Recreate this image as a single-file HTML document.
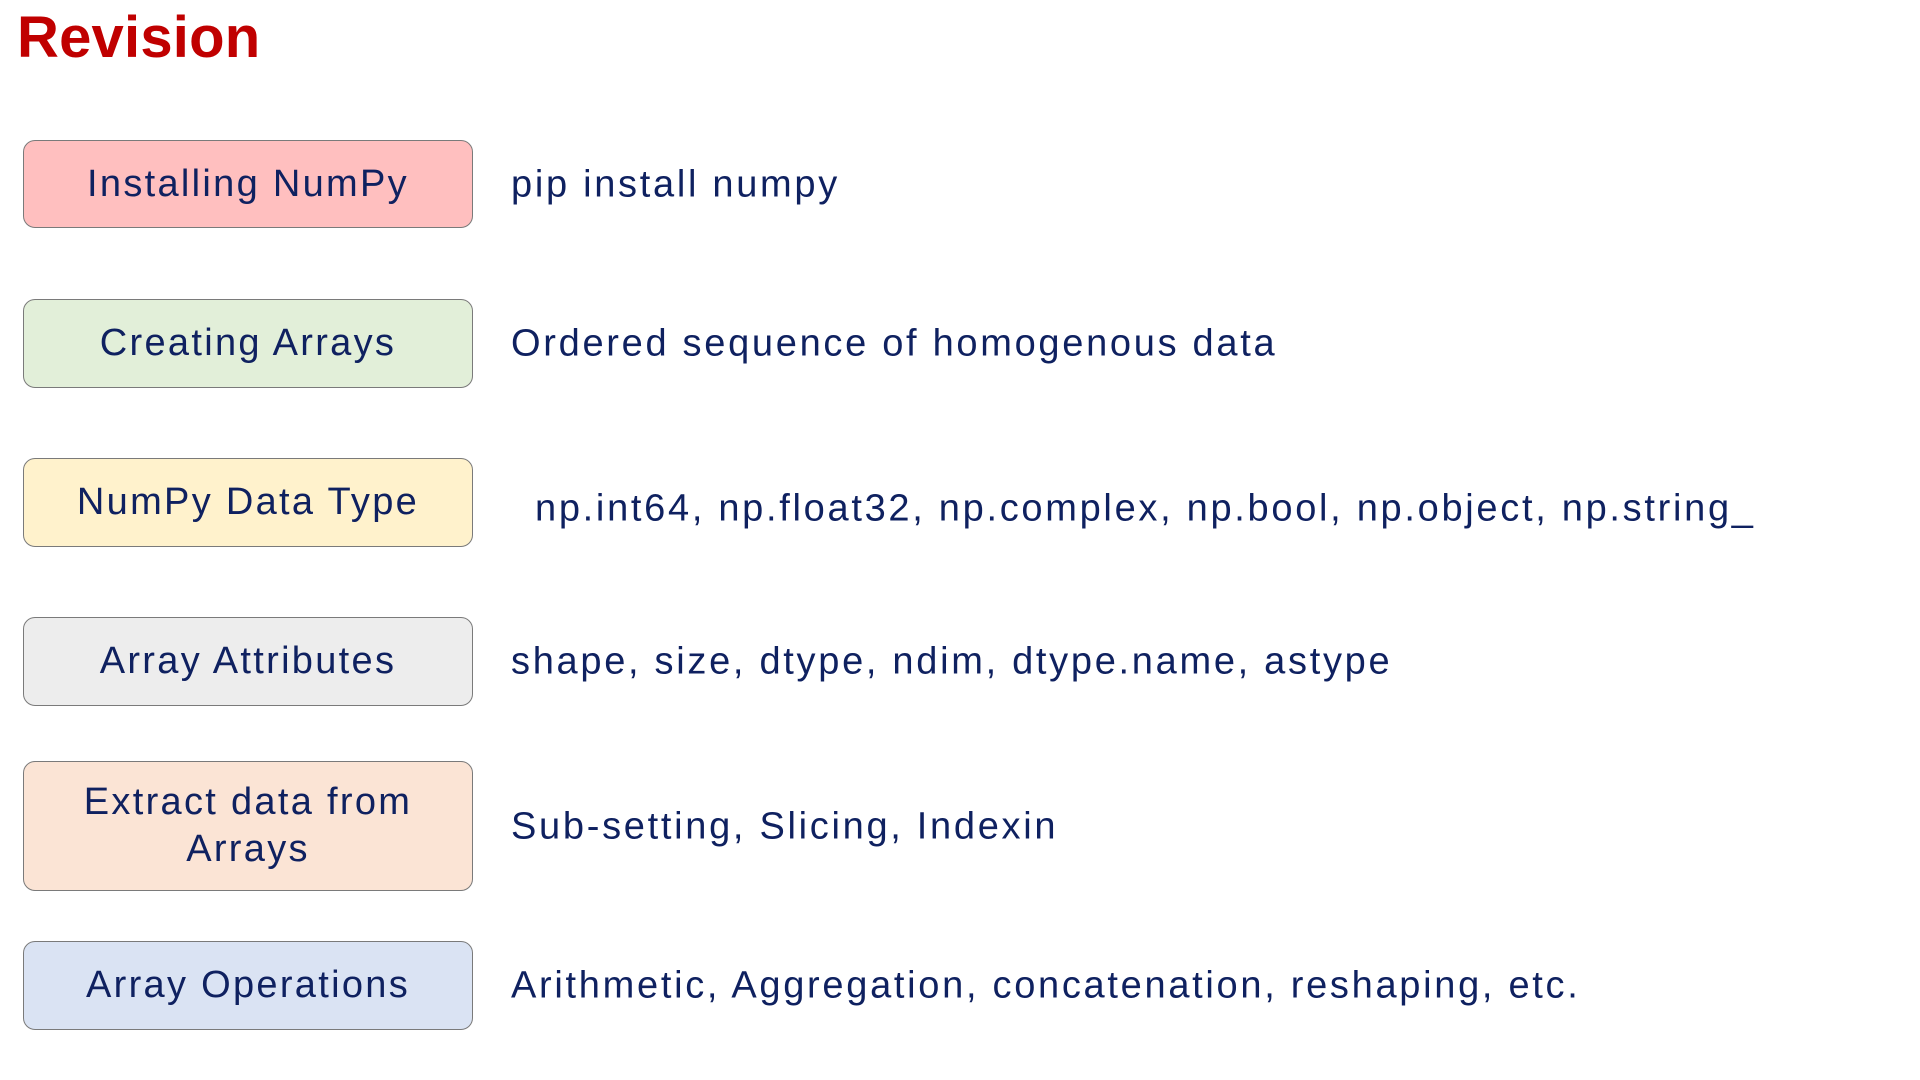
<!DOCTYPE html>
<html><head><meta charset="utf-8"><style>
body{margin:0;width:1920px;height:1080px;background:#fff;position:relative;overflow:hidden;font-family:"Liberation Sans",sans-serif;color:#0f2160}
h1{position:absolute;left:17px;top:4px;margin:0;font-size:58px;font-weight:bold;color:#c00000;letter-spacing:0.2px}
.b{position:absolute;left:23px;width:448px;border:1.5px solid #7a7a7a;border-radius:12px;display:flex;align-items:center;justify-content:center;text-align:center;font-size:38px;line-height:47px;letter-spacing:2.3px}
.t{position:absolute;left:511px;font-size:38px;line-height:47px;letter-spacing:2.7px;transform:translateY(-50%);white-space:nowrap}
</style></head><body>
<h1>Revision</h1>
<div class="b" style="top:140px;height:86px;background:#ffbfbf">Installing NumPy</div>
<div class="t" style="top:185px">pip install numpy</div>
<div class="b" style="top:299px;height:87px;background:#e2efd9">Creating Arrays</div>
<div class="t" style="top:344px">Ordered sequence of homogenous data</div>
<div class="b" style="top:458px;height:87px;background:#fff2cc">NumPy Data Type</div>
<div class="t" style="top:509px;left:535px">np.int64, np.float32, np.complex, np.bool, np.object, np.string_</div>
<div class="b" style="top:617px;height:87px;background:#ededed">Array Attributes</div>
<div class="t" style="top:662px">shape, size, dtype, ndim, dtype.name, astype</div>
<div class="b" style="top:761px;height:128px;background:#fbe4d5">Extract data from<br>Arrays</div>
<div class="t" style="top:827px">Sub-setting, Slicing, Indexin</div>
<div class="b" style="top:941px;height:87px;background:#dae3f3">Array Operations</div>
<div class="t" style="top:986px">Arithmetic, Aggregation, concatenation, reshaping, etc.</div>
</body></html>
